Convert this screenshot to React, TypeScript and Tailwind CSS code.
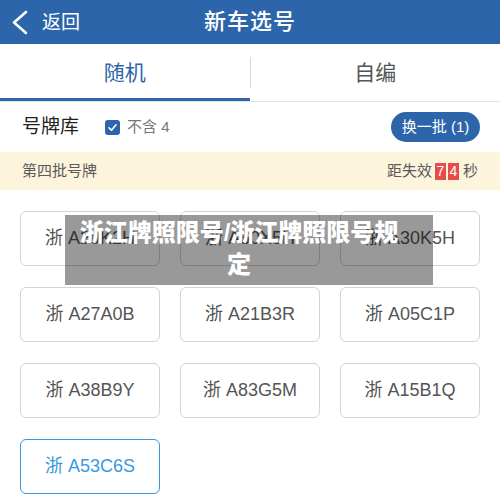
const FONT = '"Liberation Sans", "Noto Sans CJK SC", sans-serif';

const plates = [
  "浙 A20K2H",
  "浙 A60X5H",
  "浙 A30K5H",
  "浙 A27A0B",
  "浙 A21B3R",
  "浙 A05C1P",
  "浙 A38B9Y",
  "浙 A83G5M",
  "浙 A15B1Q",
  "浙 A53C6S",
];

export default function App() {
  const selected = 9;

  return (
    <div className="relative h-[500px] w-[500px] overflow-hidden bg-white" style={{ fontFamily: FONT }}>
      {/* top bar */}
      <header className="relative flex h-[44px] items-center bg-[#2d65aa] text-white">
        <div className="flex items-center pl-[10px]">
          <svg width="22" height="38" viewBox="0 0 22 38" fill="none">
            <polyline
              points="16,9 4,19.5 16,30"
              stroke="#ffffff"
              strokeWidth="2.6"
              strokeLinecap="round"
              strokeLinejoin="round"
            />
          </svg>
          <span className="ml-[10px] text-[19px] leading-none">返回</span>
        </div>
        <h1 className="absolute left-1/2 -translate-x-1/2 text-[22px] font-medium leading-none tracking-[1px]">
          新车选号
        </h1>
      </header>

      {/* tabs */}
      <div className="flex h-[58px] border-b border-[#e2e2e2]">
        <div className="flex flex-1 items-center justify-center border-b-[3px] border-[#2d65aa] pt-[3px] text-[21px] text-[#2d65aa]">
          随机
        </div>
        <div className="my-[13px] w-px bg-[#d8d8d8]" />
        <div className="flex flex-1 items-center justify-center text-[21px] text-[#555]">自编</div>
      </div>

      {/* options row */}
      <div className="flex h-[50px] items-center pl-[22px] pr-[20px]">
        <span className="text-[19px] text-[#222]">号牌库</span>
        <span className="ml-[26px] flex h-[15px] w-[15px] items-center justify-center rounded-[3px] bg-[#2d65aa]">
          <svg width="11" height="11" viewBox="0 0 11 11" fill="none">
            <polyline points="2,5.8 4.5,8.2 9,2.8" stroke="#fff" strokeWidth="1.6" strokeLinecap="round" strokeLinejoin="round" />
          </svg>
        </span>
        <span className="ml-[7px] text-[15px] text-[#777]">不含 4</span>
        <button className="ml-auto flex h-[30px] w-[89px] items-center justify-center rounded-full bg-[#2d65aa] text-[15px] text-white">
          换一批 (1)
        </button>
      </div>

      {/* batch band */}
      <div className="flex h-[38px] items-center justify-between bg-[#fdf4dc] pl-[22px] pr-[22px] text-[15px] text-[#5a5a5a]">
        <span>第四批号牌</span>
        <span className="flex items-center">
          <span>距失效</span>
          <span className="ml-[3px] flex h-[17px] w-[11px] items-center justify-center bg-[#e84b4b] text-[14px] text-white">7</span>
          <span className="ml-[2px] flex h-[17px] w-[11px] items-center justify-center bg-[#e84b4b] text-[14px] text-white">4</span>
          <span className="ml-[4px]">秒</span>
        </span>
      </div>

      {/* plates */}
      <div className="mt-[21px] grid grid-cols-3 gap-x-5 gap-y-[21px] px-5">
        {plates.map((p, i) => (
          <div
            key={p}
            className={
              i === selected
                ? "flex h-[55px] items-center justify-center rounded-[6px] border-[1.5px] border-[#3a98e0] text-[18px] text-[#3a98e0]"
                : "flex h-[55px] items-center justify-center rounded-[6px] border-[1.5px] border-[#d4d4d4] text-[18px] text-[#555]"
            }
          >
            {p}
          </div>
        ))}
      </div>

      {/* caption overlay */}
      <div className="absolute left-[65px] top-[215px] flex h-[70px] w-[368px] items-start bg-black/40 pl-3 pr-8 pt-[2px]">
        <p className="w-full text-center text-[24px] font-black leading-[32px] text-white">
          浙江牌照限号/浙江牌照限号规定
        </p>
      </div>
    </div>
  );
}
